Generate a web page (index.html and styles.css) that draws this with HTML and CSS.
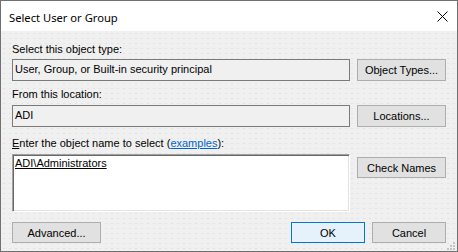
FILE: index.html
```html
<!DOCTYPE html>
<html lang="en">
<head>
    <meta charset="UTF-8">
    <meta name="viewport" content="width=device-width, initial-scale=1.0">
    <title>Select User or Group</title>
    <link rel="stylesheet" href="styles.css">
</head>
<body>
    <div class="window">
        <div class="titlebar">
            <span class="title">Select User or Group</span>
            <svg class="close-icon" width="11" height="11" viewBox="0 0 11 11">
                <path d="M0.5 0.5 L10.5 10.5 M10.5 0.5 L0.5 10.5" stroke="#000" stroke-width="1" fill="none"/>
            </svg>
        </div>
        <div class="content">
            <div class="label label_first">Select this object type:</div>
            <div class="row">
                <div class="field">User, Group, or Built-in security principal</div>
                <button class="btn btn_tall">Object Types...</button>
            </div>

            <div class="label label_second">From this location:</div>
            <div class="row">
                <div class="field">ADI</div>
                <button class="btn btn_tall">Locations...</button>
            </div>

            <div class="label label_third"><u>E</u>nter the object name to select (<a class="link" href="#">examples</a>):</div>
            <div class="row row_names">
                <div class="names-box"><span class="name-entry">ADI\Administrators</span></div>
                <button class="btn btn_check">Check Names</button>
            </div>

            <div class="bottom-buttons">
                <button class="btn btn_advanced">Advanced...</button>
                <div class="dialog-buttons">
                    <button class="btn btn_ok">OK</button>
                    <button class="btn btn_cancel">Cancel</button>
                </div>
            </div>

            <svg class="resize-grip" width="8" height="8" viewBox="0 0 8 8">
                <rect x="6" y="0" width="2" height="2" fill="#c4c4c4"/>
                <rect x="3" y="3" width="2" height="2" fill="#c4c4c4"/>
                <rect x="6" y="3" width="2" height="2" fill="#c4c4c4"/>
                <rect x="0" y="6" width="2" height="2" fill="#c4c4c4"/>
                <rect x="3" y="6" width="2" height="2" fill="#c4c4c4"/>
                <rect x="6" y="6" width="2" height="2" fill="#c4c4c4"/>
            </svg>
        </div>
    </div>
</body>
</html>
```

FILE: styles.css
```css
body {
    margin: 0;
    padding: 0;
    font-family: "Liberation Sans", Arial, sans-serif;
    font-size: 11px;
    color: #000;
    background-color: #f0f0f0;
}

.window {
    width: 458px;
    height: 252px;
    box-sizing: border-box;
    border: 1px solid #707070;
    display: flex;
    flex-direction: column;
    overflow: hidden;
}

.titlebar {
    height: 30px;
    flex: none;
    background-color: #fff;
    display: flex;
    align-items: center;
    justify-content: space-between;
    padding: 0 9px 0 8px;
}

.title {
    font-family: "Noto Sans", "Open Sans", sans-serif;
    font-size: 11.2px;
    color: #000;
    position: relative;
    top: 1px;
}

.close-icon {
    display: block;
}

.content {
    flex: 1;
    position: relative;
    padding: 12px 11px 0 11px;
    background-color: #f0f0f0;
    background-image: radial-gradient(circle, #e3e3e3 0.6px, transparent 0.9px);
    background-size: 6px 5px;
}

.label {
    height: 13px;
    line-height: 13px;
    white-space: nowrap;
}

.label_first {
    margin-bottom: 3px;
}

.label_second {
    margin-top: 7px;
    margin-bottom: 4px;
}

.label_third {
    margin-top: 10px;
    margin-bottom: 4px;
}

.link {
    color: #0066cc;
    text-decoration: underline;
}

.row {
    display: flex;
    align-items: flex-start;
    gap: 7px;
}

.field {
    width: 338px;
    height: 22px;
    box-sizing: border-box;
    border: 1px solid #7a7a7a;
    background-color: #f0f0f0;
    padding: 0 2px;
    line-height: 18px;
    white-space: nowrap;
}

.names-box {
    width: 338px;
    height: 58px;
    box-sizing: border-box;
    border: 1px solid;
    border-color: #a0a0a0 #ffffff #ffffff #a0a0a0;
    box-shadow: inset 1px 1px 0 #696969, inset -1px -1px 0 #e3e3e3;
    background-color: #fff;
    padding: 2px 2px;
    line-height: 13px;
}

.name-entry {
    text-decoration: underline;
}

.btn {
    font-family: "Liberation Sans", Arial, sans-serif;
    font-size: 11px;
    color: #000;
    background-color: #e1e1e1;
    border: 1px solid #adadad;
    border-radius: 0;
    padding: 0;
    margin: 0;
    box-sizing: border-box;
    height: 21px;
    cursor: pointer;
}

.btn_tall {
    width: 89px;
    height: 22px;
}

.btn_check {
    width: 89px;
    margin-top: 3px;
}

.bottom-buttons {
    display: flex;
    justify-content: space-between;
    margin-top: 10px;
}

.btn_advanced {
    width: 89px;
}

.dialog-buttons {
    display: flex;
    gap: 7px;
}

.btn_ok {
    width: 74px;
    background-color: #e5f1fb;
    border-color: #0078d7;
}

.btn_cancel {
    width: 74px;
}

.resize-grip {
    position: absolute;
    right: 2px;
    bottom: 1px;
}
```
